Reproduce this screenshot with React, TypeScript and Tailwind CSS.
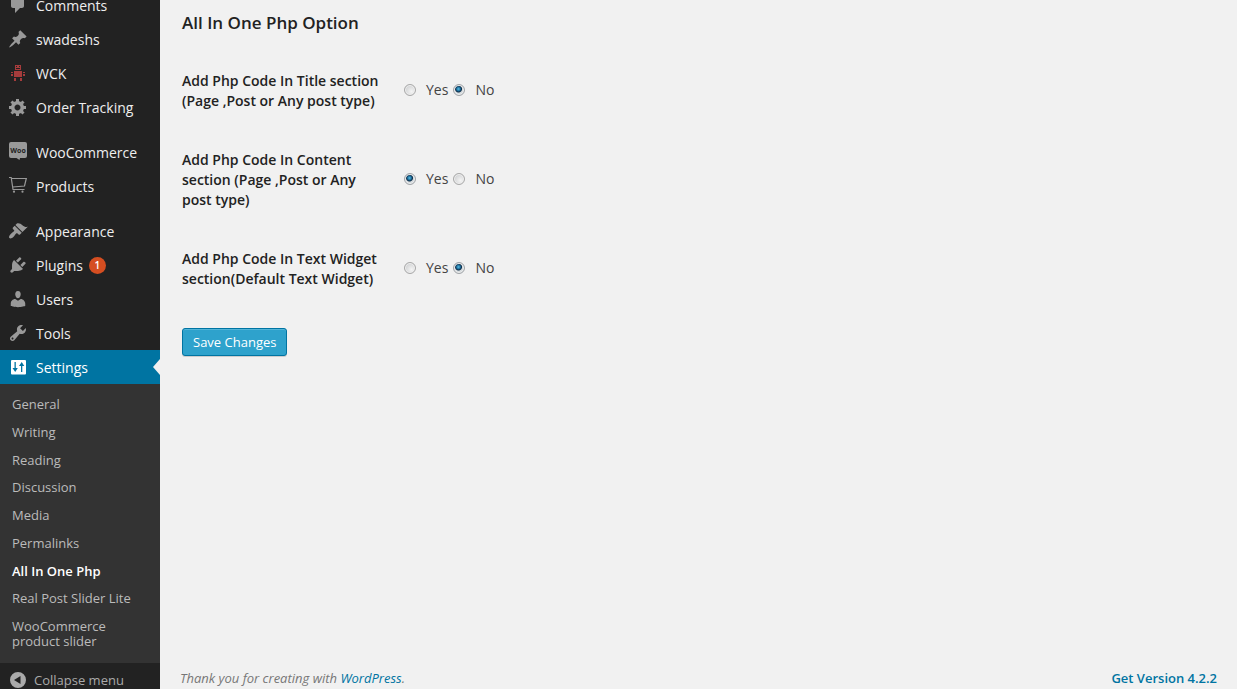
import type { ReactNode } from "react";

const glyphs: Record<string, ReactNode> = {
  comments: (
    <path d="M5 2h9c1.1 0 2 .9 2 2v7c0 1.1-.9 2-2 2h-2l-5 5v-5H5c-1.1 0-2-.9-2-2V4c0-1.1.9-2 2-2z" />
  ),
  pin: (
    <path d="M10.44 3.02l1.82-1.82 6.36 6.35-1.83 1.82c-1.05-.68-2.48-.57-3.41.36l-.75.75c-.92.93-1.04 2.35-.35 3.41l-1.83 1.82-2.41-2.41-2.8 2.79c-.42.42-3.38 2.71-3.8 2.29s1.86-3.39 2.28-3.81l2.79-2.79L4.1 9.36l1.83-1.82c1.05.69 2.48.57 3.4-.36l.75-.75c.93-.92 1.05-2.35.36-3.41z" />
  ),
  robot: (
    <g fill="#a63c3c">
      <path
        fillRule="evenodd"
        d="M7 2h6v5H7zM8 3v1h1V3zM11 3v1h1V3zM8 5v1h4V5z"
      />
      <path d="M6 8h8v6H6zM3 9h2v1H3zM3 11h2v2H3zM15 9h2v1h-2zM15 11h2v2h-2zM6 15h2v3H6zM12 15h2v3h-2z" />
    </g>
  ),
  gear: (
    <path d="M18 12h-2.18c-.17.7-.44 1.35-.81 1.93l1.54 1.54-2.1 2.1-1.54-1.54c-.58.36-1.23.63-1.91.79V19H8v-2.18c-.68-.16-1.33-.43-1.91-.79l-1.54 1.54-2.12-2.12 1.54-1.54c-.36-.58-.63-1.23-.79-1.91H1V9.03h2.17c.16-.7.44-1.35.8-1.94L2.43 5.55l2.1-2.1 1.54 1.54c.58-.37 1.24-.64 1.93-.81V2h3v2.18c.68.16 1.33.43 1.91.79l1.54-1.54 2.12 2.12-1.54 1.54c.36.59.64 1.24.8 1.94H18V12zm-8.5 1.5c1.66 0 3-1.34 3-3s-1.34-3-3-3-3 1.34-3 3 1.34 3 3 3z" />
  ),
  woo: (
    <>
      <path d="M3 0h14a2 2 0 0 1 2 2v12a2 2 0 0 1-2 2h-5l-.5 2-3-2H3a2 2 0 0 1-2-2V2a2 2 0 0 1 2-2z" />
      <text
        x="10"
        y="10.500"
        textAnchor="middle"
        fontFamily="Open Sans, sans-serif"
        fontSize="7"
        fontWeight="700"
        fill="#222"
      >
        Woo
      </text>
    </>
  ),
  cart: (
    <>
      <path
        d="M1 1.500h2.200L5 13.500h11.500M3.600 2.500H18.300l-1.800 7.500-11.700 1"
        fill="none"
        stroke="currentColor"
        strokeWidth="1.200"
      />
      <circle cx="6" cy="15.700" r="1.100" />
      <circle cx="14.500" cy="15.700" r="1.100" />
    </>
  ),
  brush: (
    <path d="M14.480 11.060L7.410 3.990l1.500-1.500c.5-.56 2.300-.47 3.510.32 1.210.8 1.430 1.280 2.910 2.100 1.180.64 2.450 1.260 4.450.85zm-.71.71L6.700 4.700 4.930 6.470c-.39.39-.39 1.020 0 1.410l1.060 1.060c.39.39.39 1.030 0 1.420-.6.6-1.430 1.110-2.210 1.690-.35.26-.7.53-1.010.84C1.430 14.230.4 16.080 1.400 17.070c.99 1 2.840-.03 4.180-1.360.31-.31.58-.66.85-1.020.57-.78 1.080-1.610 1.690-2.210.39-.39 1.020-.39 1.410 0l1.060 1.060c.39.39 1.020.39 1.410 0z" />
  ),
  plug: (
    <path d="M13.110 4.360L9.870 7.600 8 5.730l3.240-3.240c.35-.34 1.050-.2 1.560.32.52.51.66 1.210.31 1.550zm-8 1.770l.91-1.120 9.010 9.010-1.190.84c-.71.71-2.630 1.160-3.820 1.160H6.140L4.900 17.260c-.59.59-1.540.59-2.120 0-.59-.58-.59-1.530 0-2.120l1.240-1.240v-3.880c0-1.130.4-3.190 1.090-3.890zm7.260 3.970l3.240-3.240c.34-.35 1.040-.21 1.550.31.52.51.66 1.210.31 1.550l-3.240 3.250z" />
  ),
  user: (
    <path d="M10 9.250c-2.270 0-2.730-3.440-2.730-3.440C7 4.020 7.820 2 9.970 2c2.160 0 2.980 2.020 2.710 3.810 0 0-.41 3.440-2.680 3.440zm0 2.570L12.720 10c2.390 0 4.520 2.330 4.520 4.530v2.490s-3.650 1.130-7.240 1.130c-3.650 0-7.240-1.130-7.240-1.130v-2.490c0-2.250 1.940-4.480 4.470-4.480z" />
  ),
  wrench: (
    <path d="M16.680 9.770c-1.340 1.340-3.300 1.670-4.950.99l-5.410 6.520c-.99.99-2.590.99-3.580 0s-.99-2.590 0-3.570l6.520-5.420c-.68-1.650-.35-3.610.99-4.950 1.280-1.280 3.120-1.620 4.720-1.060l-2.890 2.890 2.820 2.820 2.860-2.870c.53 1.580.18 3.390-1.080 4.650zM3.810 16.210c.4.39 1.040.39 1.430 0 .4-.4.4-1.040 0-1.430-.39-.4-1.030-.4-1.430 0-.39.39-.39 1.030 0 1.430z" />
  ),
  sliders: (
    <>
      <rect x="3" y="3" width="15" height="14.500" rx="1" />
      <path
        fill="#0074a2"
        d="M6.500 5h1.300v6h2L7.200 15l-2.700-4h2zM13 15h1.300V9h2L13.700 5 11 9h2z"
      />
    </>
  ),
  collapse: (
    <path
      fillRule="evenodd"
      d="M10 2a8 8 0 1 1 0 16 8 8 0 0 1 0-16zM12.500 6v8L6 10z"
    />
  ),
};

function Icon({ name }: { name: string }) {
  return (
    <svg viewBox="0 0 20 20" className="size-5 shrink-0" fill="currentColor" aria-hidden="true">
      {glyphs[name]}
    </svg>
  );
}

type Item = { label: string; icon: string; badge?: string; current?: boolean };

const groups: Item[][] = [
  [
    { label: "Comments", icon: "comments" },
    { label: "swadeshs", icon: "pin" },
    { label: "WCK", icon: "robot" },
    { label: "Order Tracking", icon: "gear" },
  ],
  [
    { label: "WooCommerce", icon: "woo" },
    { label: "Products", icon: "cart" },
  ],
  [
    { label: "Appearance", icon: "brush" },
    { label: "Plugins", icon: "plug", badge: "1" },
    { label: "Users", icon: "user" },
    { label: "Tools", icon: "wrench" },
    { label: "Settings", icon: "sliders", current: true },
  ],
];

const submenu = [
  "General",
  "Writing",
  "Reading",
  "Discussion",
  "Media",
  "Permalinks",
  "All In One Php",
  "Real Post Slider Lite",
  "WooCommerce product slider",
];

function MenuItem({ item }: { item: Item }) {
  return (
    <li>
      <a
        href="#"
        aria-current={item.current ? "true" : undefined}
        className={
          item.current
            ? "relative flex h-[34px] items-center gap-2 bg-[#0074a2] pl-2 text-sm text-white"
            : "flex h-[34px] items-center gap-2 pl-2 text-sm text-[#eee]"
        }
      >
        <span className={item.current ? "text-white" : "text-[#999]"}>
          <Icon name={item.icon} />
        </span>
        <span className="pt-0.5">{item.label}</span>
        {item.badge && (
          <span className="-ml-0.5 flex size-[17px] items-center justify-center rounded-full bg-[#d54e21] text-[10px] font-semibold text-white">
            {item.badge}
          </span>
        )}
        {item.current && (
          <span className="absolute top-1/2 right-0 -translate-y-1/2 border-y-8 border-r-[7px] border-y-transparent border-r-[#f1f1f1]" />
        )}
      </a>
    </li>
  );
}

function Sidebar() {
  return (
    <nav aria-label="Main menu" className="w-40 shrink-0 bg-[#222]">
      <div className="-mt-3">
        <div className="flex flex-col gap-[11px]">
          {groups.map((items, index) => (
            <ul key={index}>
              {items.map((item) => (
                <MenuItem key={item.label} item={item} />
              ))}
            </ul>
          ))}
        </div>
        <ul className="flex min-h-[279px] flex-col justify-between bg-[#333] px-3 pt-[13px] pb-3.5 text-[13px] leading-[15px]">
          {submenu.map((label) => (
            <li key={label}>
              <a
                href="#"
                className={
                  label === "All In One Php" ? "block font-semibold text-white" : "block text-[#bbb]"
                }
              >
                {label}
              </a>
            </li>
          ))}
        </ul>
        <button
          type="button"
          className="flex h-[34px] w-full items-center gap-1.5 pl-2 text-[13px] text-[#aaa]"
        >
          <Icon name="collapse" />
          Collapse menu
        </button>
      </div>
    </nav>
  );
}

const options = [
  { id: "title", label: "Add Php Code In Title section (Page ,Post or Any post type)", value: "No" },
  { id: "content", label: "Add Php Code In Content section (Page ,Post or Any post type)", value: "Yes" },
  { id: "widget", label: "Add Php Code In Text Widget section(Default Text Widget)", value: "No" },
];

function Radio({ name, value, checked }: { name: string; value: string; checked: boolean }) {
  return (
    <label className="flex items-center gap-2.5">
      <input
        type="radio"
        name={name}
        value={value}
        defaultChecked={checked}
        className="size-3 appearance-none rounded-full border border-[#a8a8a8] bg-[radial-gradient(circle_at_65%_65%,#f4f4f4,#c4c6c8)] shadow-[inset_0_0_0_1px_#f0f0f0] checked:border-[#a0a4a8] checked:bg-[radial-gradient(circle_at_45%_40%,#58c0e8_0px,#1b6a97_2px,#0d2c47_3px,#d5dadd_4px)]"
      />
      {value}
    </label>
  );
}

export default function App() {
  return (
    <div className="flex h-screen overflow-hidden bg-[#f1f1f1] font-['Open_Sans',sans-serif] text-sm text-[#444]">
      <Sidebar />
      <main className="flex min-w-0 grow flex-col pr-5 pl-5">
        <form className="grow pl-0.5" onSubmit={(event) => event.preventDefault()}>
          <h1 className="pt-[11px] text-[17px] leading-6 font-semibold text-[#222]">
            All In One Php Option
          </h1>
          <div className="mt-4">
            {options.map((option) => (
              <div
                key={option.id}
                role="radiogroup"
                aria-labelledby={option.id}
                className="flex items-center pt-5 pb-[19px]"
              >
                <div id={option.id} className="w-[222px] pr-[22px] leading-5 font-semibold text-[#222]">
                  {option.label}
                </div>
                <div className="flex gap-[5px] pb-0.5">
                  <Radio name={option.id} value="Yes" checked={option.value === "Yes"} />
                  <Radio name={option.id} value="No" checked={option.value === "No"} />
                </div>
              </div>
            ))}
          </div>
          <button
            type="submit"
            className="mt-5 h-7 rounded-[3px] border border-[#0074a2] bg-[#2ea2cc] px-2.5 text-[13px] text-white shadow-[inset_0_1px_0_rgba(120,200,230,0.5),0_1px_0_rgba(0,0,0,0.15)]"
          >
            Save Changes
          </button>
        </form>
        <footer className="flex justify-between pb-px text-[13px] leading-5 text-[#777]">
          <p className="italic">
            Thank you for creating with{" "}
            <a href="#" className="text-[#0074a2]">
              WordPress
            </a>
            .
          </p>
          <a href="#" className="font-semibold text-[#0074a2]">
            Get Version 4.2.2
          </a>
        </footer>
      </main>
    </div>
  );
}
